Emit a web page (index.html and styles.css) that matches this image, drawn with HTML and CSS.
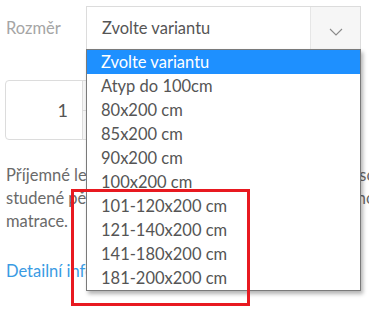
FILE: index.html
```html
<!DOCTYPE html>
<html lang="cs">
<head>
  <meta charset="UTF-8" />
  <title>Rozměr</title>
  <link rel="stylesheet" href="styles.css">
</head>
<body>

  <div class="variant-row">
    <div class="label">Rozměr</div>
    <div class="select">
      <div class="select-value">Zvolte variantu</div>
      <div class="select-arrow">
        <svg width="14" height="8" viewBox="0 0 14 8"><path d="M1 1 L7 7 L13 1" fill="none" stroke="#8a8a8a" stroke-width="1.1"/></svg>
      </div>
    </div>
  </div>

  <div class="qty">
    <div class="qty-input">1</div>
    <div class="qty-buttons">
      <div class="qty-btn"></div>
      <div class="qty-btn"></div>
    </div>
  </div>

  <p class="desc">Příjemné letní provedení potahu vhodné pro vás, soustavně<br>studené pěny nesnáší, ale chtějí pohodlí i kvalitu nové<br>matrace.</p>

  <a class="more" href="#">Detailní informace</a>

  <ul class="options">
    <li class="active">Zvolte variantu</li>
    <li>Atyp do 100cm</li>
    <li>80x200 cm</li>
    <li>85x200 cm</li>
    <li>90x200 cm</li>
    <li>100x200 cm</li>
    <li>101-120x200 cm</li>
    <li>121-140x200 cm</li>
    <li>141-180x200 cm</li>
    <li>181-200x200 cm</li>
  </ul>

  <div class="highlight"></div>

</body>
</html>
```

FILE: styles.css
```css
*, *::before, *::after { box-sizing: border-box; margin: 0; padding: 0; }

body {
  font-family: Lato, 'Open Sans', sans-serif;
  font-size: 16.5px;
  color: #666;
  background: #fff;
  width: 369px;
  height: 311px;
  overflow: hidden;
  position: relative;
}

/* Variant select */
.variant-row {
  display: flex;
  align-items: center;
  padding-top: 6px;
}

.label {
  width: 86px;
  padding-left: 6px;
  color: #a5a5a5;
}

.select {
  width: 275px;
  height: 44px;
  display: flex;
  border: 1px solid #dcdcdc;
  background: #fff;
}

.select-value {
  flex: 1;
  display: flex;
  align-items: center;
  padding-left: 15px;
  color: #555;
}

.select-arrow {
  width: 50px;
  display: flex;
  align-items: center;
  justify-content: center;
  padding-top: 8px;
  background: #f6f6f6;
  border-left: 1px solid #e6e6e6;
}

/* Quantity */
.qty {
  display: flex;
  width: 130px;
  height: 60px;
  margin: 30px 0 0 5px;
  border: 1px solid #dcdcdc;
  border-radius: 4px;
}

.qty-input {
  width: 76px;
  display: flex;
  align-items: center;
  justify-content: flex-end;
  padding-right: 14px;
  color: #555;
  font-size: 18px;
}

.qty-buttons {
  flex: 1;
  display: flex;
  flex-direction: column;
  border-left: 1px solid #dcdcdc;
  background: #f6f6f6;
}

.qty-btn { flex: 1; }
.qty-btn + .qty-btn { border-top: 1px solid #dcdcdc; }

/* Description */
.desc {
  margin: 24px 0 0 6px;
  line-height: 23px;
  white-space: nowrap;
  color: #6a6a6a;
}

.more {
  display: block;
  margin: 28px 0 0 6px;
  color: #3a9be3;
  text-decoration: none;
}

/* Opened dropdown */
.options {
  position: absolute;
  top: 49px;
  left: 86px;
  width: 275px;
  list-style: none;
  background: #fff;
  border: 1px solid #7a7a7a;
  box-shadow: 2px 3px 4px rgba(0,0,0,0.3);
}

.options li {
  height: 24px;
  line-height: 24px;
  padding-left: 14px;
  color: #555;
}

.options li.active {
  background: #1e90ff;
  color: #fff;
}

/* Annotation frame */
.highlight {
  position: absolute;
  left: 71px;
  top: 189px;
  width: 179px;
  height: 117px;
  border: 3px solid #e81920;
}
```
